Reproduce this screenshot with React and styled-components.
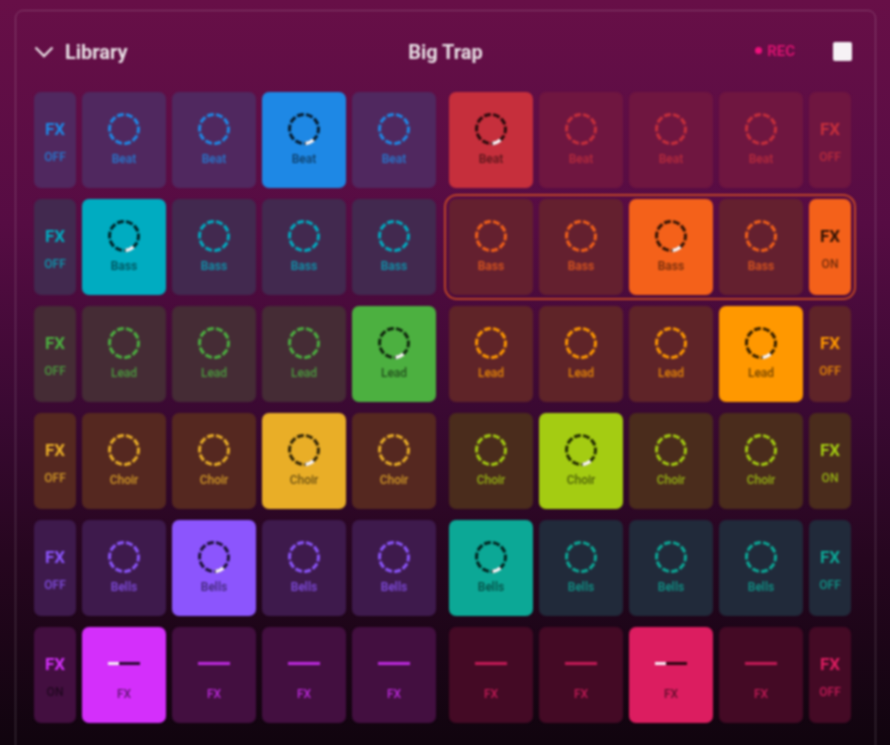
import styled, { createGlobalStyle } from "styled-components";

const Global = createGlobalStyle`
  html, body {
    margin: 0;
    padding: 0;
    height: 745px;
    overflow: hidden;
    background: #12040f;
  }
`;

const Page = styled.div`
  width: 890px;
  height: 745px;
  box-sizing: border-box;
  padding: 10px 14px 0 15px;
  overflow: hidden;
  font-family: Roboto, "Liberation Sans", sans-serif;
  background: linear-gradient(180deg, #670f47 0%, #560c43 30%, #3a0932 55%, #26061f 75%, #10040e 100%);
`;

const Panel = styled.section`
  height: 760px;
  box-sizing: border-box;
  padding: 0 22px 0 18px;
  border: 1.5px solid rgba(255, 255, 255, 0.2);
  border-radius: 8px;
  filter: blur(0.8px);
`;

const Header = styled.header`
  height: 81px;
  display: grid;
  grid-template-columns: 1fr auto 1fr;
  align-items: center;
`;

const Library = styled.div`
  display: flex;
  align-items: center;
  gap: 11px;
  font-size: 20px;
  font-weight: 700;
  color: #e8dfe4;
`;

const Title = styled.div`
  margin-left: 4px;
  font-size: 20px;
  font-weight: 700;
  color: #e8dfe4;
`;

const Actions = styled.div`
  display: flex;
  justify-content: flex-end;
  align-items: center;
`;

const Rec = styled.div`
  display: flex;
  align-items: center;
  gap: 5px;
  margin: 0 38px 2px 0;
  font-size: 15px;
  font-weight: 700;
  color: #d8126f;
`;

const Dot = styled.span`
  width: 7px;
  height: 7px;
  border-radius: 50%;
  background: #f0107c;
`;

const Stop = styled.div`
  width: 19px;
  height: 19px;
  margin-right: 1px;
  border-radius: 2px;
  background: #f6f2f5;
`;

const Rows = styled.div`
  display: flex;
  flex-direction: column;
  gap: 11px;
`;

const Row = styled.div`
  display: flex;
  gap: 13px;
`;

const Half = styled.div`
  display: flex;
  gap: 6px;
  border-radius: 8px;
  outline: ${(p) => (p.$selected ? `2px solid ${p.$selected}aa` : "none")};
  outline-offset: 3px;
`;

const Cell = styled.div`
  height: 96px;
  box-sizing: border-box;
  border-radius: 7px;
  display: flex;
  flex-direction: column;
  align-items: center;
  background: ${(p) => (p.$on ? p.$color : p.$fill)};
  color: ${(p) => (p.$on ? "rgba(0, 0, 0, 0.55)" : `${p.$color}d8`)};
`;

const Pad = styled(Cell)`
  width: 84px;
  padding-top: 20px;
`;

const Toggle = styled(Cell)`
  width: 42px;
  padding-top: 27px;
`;

const FxName = styled.div`
  font-size: 17px;
  line-height: 20px;
  font-weight: 700;
  color: ${(p) => (p.$on ? "rgba(0, 0, 0, 0.8)" : p.$color)};
`;

const FxState = styled.div`
  margin-top: 11px;
  font-size: 12px;
  line-height: 14px;
  font-weight: 500;
  color: ${(p) => (p.$dark ? "rgba(0, 0, 0, 0.55)" : "inherit")};
`;

const Label = styled.div`
  margin-top: 6px;
  font-size: 12px;
  line-height: 14px;
  font-weight: 500;
`;

const BarBox = styled.div`
  height: 32px;
  display: flex;
  align-items: center;
  margin-bottom: 2px;
`;

const Bar = styled.div`
  width: 32px;
  height: 3px;
  background: ${(p) => (p.$on ? "rgba(0, 0, 0, 0.8)" : `${p.$color}d8`)};
`;

const BarFill = styled.div`
  width: 11px;
  height: 100%;
  background: #f7eef5;
`;

const Chevron = () => (
  <svg width="20" height="12" viewBox="0 0 20 12" fill="none">
    <path d="M1.5 1.5 L10 10 L18.5 1.5" stroke="#e8dfe4" strokeWidth="2.4" />
  </svg>
);

const Ring = ({ color, on }) => (
  <svg width="34" height="34" viewBox="0 0 34 34" fill="none">
    <circle
      cx="17"
      cy="17"
      r="14.5"
      stroke={on ? "rgba(0,0,0,0.8)" : color}
      strokeWidth="3"
      strokeDasharray="7.2 2.2"
      pathLength="94"
      transform="rotate(-10 17 17)"
    />
    {on && <path d="M18.5 31.4 A14.5 14.5 0 0 0 26.5 28" stroke="#fbf6f8" strokeWidth="3.5" />}
  </svg>
);

const tracks = [
  { name: "Beat", left: "#1e88e5", right: "#c62f3c", fill: ["#50285f", "#6f1640"], on: [2, 0], fx: ["OFF", "OFF"] },
  { name: "Bass", left: "#00acc1", right: "#f4611a", fill: ["#42294f", "#64202f"], on: [0, 2], fx: ["OFF", "ON"], selected: true },
  { name: "Lead", left: "#4cb040", right: "#ff9800", fill: ["#452c35", "#5f2428"], on: [3, 3], fx: ["OFF", "OFF"] },
  { name: "Choir", left: "#e9ae27", right: "#a4cc12", fill: ["#552820", "#4a2c1c"], on: [2, 1], fx: ["OFF", "ON"] },
  { name: "Bells", left: "#8c55fd", right: "#0ca896", fill: ["#3e1a4c", "#212a3a"], on: [1, 0], fx: ["OFF", "OFF"] },
  { name: "FX", left: "#d42ffb", right: "#dc1d60", fill: ["#430f40", "#440a25"], on: [0, 2], fx: ["ON", "OFF"], bar: true },
];

const Slot = ({ track, color, fill, on }) => (
  <Pad $color={color} $fill={fill} $on={on}>
    {track.bar ? (
      <BarBox>
        <Bar $color={color} $on={on}>
          {on && <BarFill />}
        </Bar>
      </BarBox>
    ) : (
      <Ring color={color} on={on} />
    )}
    <Label>{track.name}</Label>
  </Pad>
);

const Fx = ({ color, fill, state, on, dark }) => (
  <Toggle $color={color} $fill={fill} $on={on}>
    <FxName $color={color} $on={on}>FX</FxName>
    <FxState $dark={dark}>{state}</FxState>
  </Toggle>
);

const slots = [0, 1, 2, 3];

const App = () => (
  <Page>
    <Global />
    <Panel>
      <Header>
        <Library>
          <Chevron />
          Library
        </Library>
        <Title>Big Trap</Title>
        <Actions>
          <Rec>
            <Dot />
            REC
          </Rec>
          <Stop />
        </Actions>
      </Header>
      <Rows>
        {tracks.map((track) => (
          <Row key={track.name}>
            <Half>
              <Fx
                color={track.left}
                fill={track.fill[0]}
                state={track.fx[0]}
                dark={track.fx[0] === "ON"}
              />
              {slots.map((i) => (
                <Slot key={i} track={track} color={track.left} fill={track.fill[0]} on={track.on[0] === i} />
              ))}
            </Half>
            <Half $selected={track.selected ? track.right : null}>
              {slots.map((i) => (
                <Slot key={i} track={track} color={track.right} fill={track.fill[1]} on={track.on[1] === i} />
              ))}
              <Fx
                color={track.right}
                fill={track.fill[1]}
                state={track.fx[1]}
                on={track.selected}
              />
            </Half>
          </Row>
        ))}
      </Rows>
    </Panel>
  </Page>
);

export default App;
